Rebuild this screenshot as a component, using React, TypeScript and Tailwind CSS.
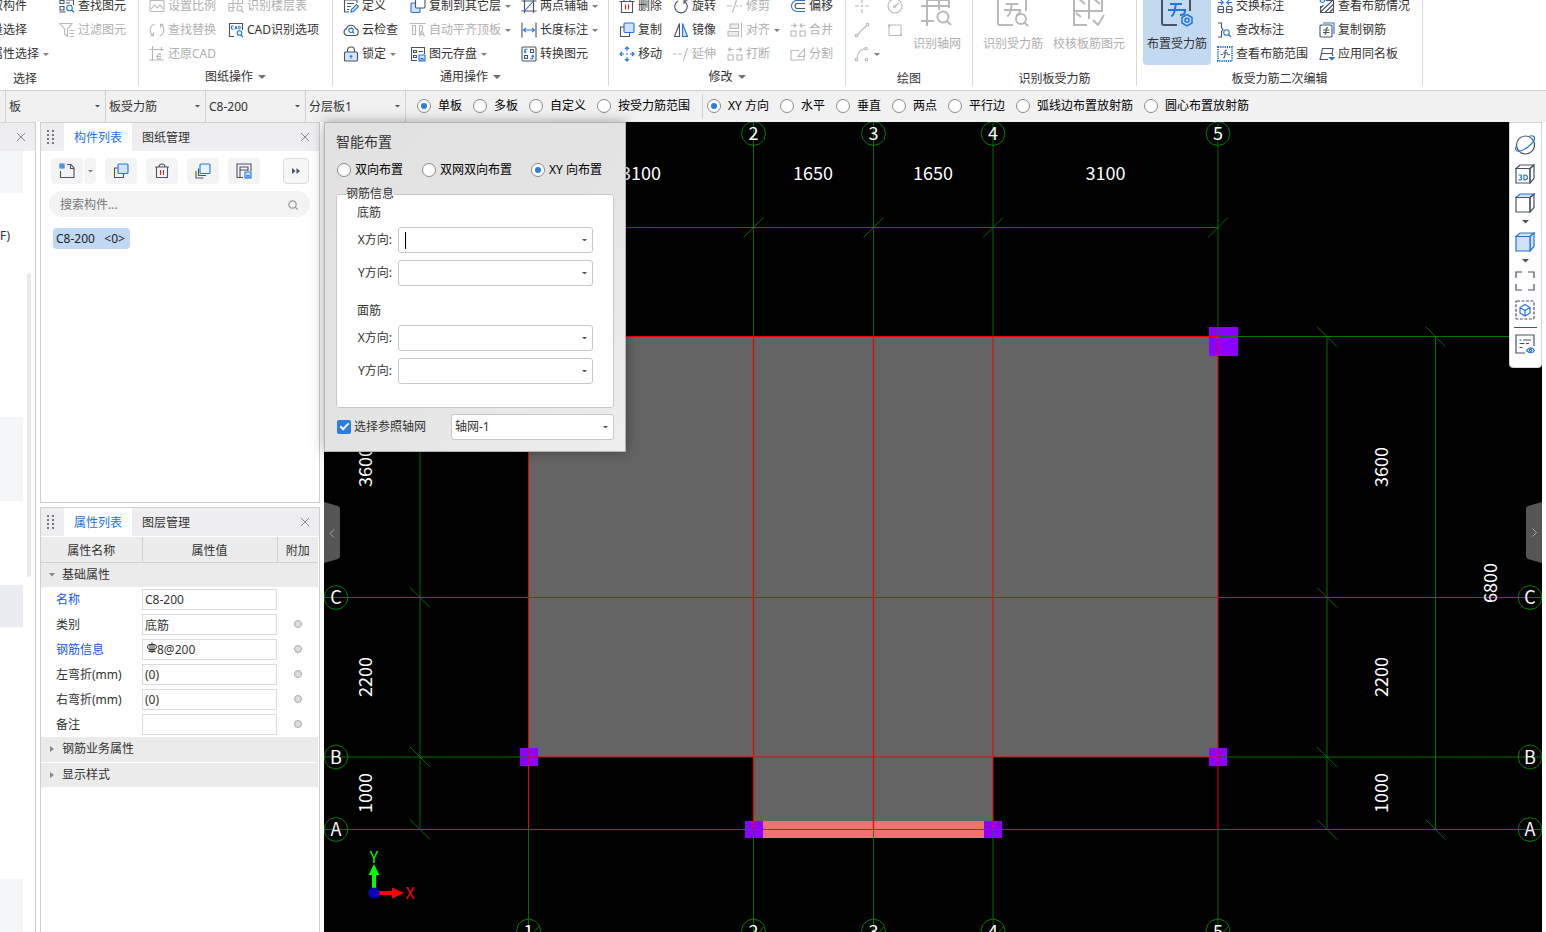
import React from "react";

const DARK = "#4a5266";
const BLUE = "#2374e1";
const GRAY = "#b9b9b9";

type IconProps = { children: React.ReactNode; size?: string; color?: string };

function Icon({ children, size = "size-4", color = DARK }: IconProps) {
  return (
    <svg viewBox="0 0 16 16" className={`${size} shrink-0`} fill="none" stroke={color} strokeWidth="1.1" aria-hidden="true">
      {children}
    </svg>
  );
}

function Caret({ className = "w-[5px] text-[#808080]" }: { className?: string }) {
  return (
    <svg viewBox="0 0 8 4" className={`${className} shrink-0`} fill="currentColor" aria-hidden="true">
      <path d="M0 0H8L4 4Z" />
    </svg>
  );
}

const icons: Record<string, React.ReactNode> = {
  find: (
    <Icon>
      <path d="M1 2.500h4v3H1zM1 8.500h4v3.500H1zM7 2h7.500v5M7 5h4M0.500 14h6" />
      <circle cx="10.500" cy="10" r="2.800" stroke={BLUE} />
      <path d="M12.500 12l2.500 2.500" stroke={BLUE} />
    </Icon>
  ),
  filter: (
    <Icon color={GRAY}>
      <path d="M1 1.500h12L8.500 7v7.500L5.500 12V7zM10.500 8.500H15M10.500 11.500H15M10.500 14.500H15" />
    </Icon>
  ),
  scale: (
    <Icon color={GRAY}>
      <rect x="1" y="2.500" width="14" height="11" rx="1" />
      <path d="M2 11l3.500-4L8 10l3-3 3 4" />
    </Icon>
  ),
  swap: (
    <Icon color={GRAY}>
      <path d="M5.500 2A6.500 6.500 0 0 0 4 13.500M4.500 10.500v3.200H1.500M10.500 14A6.500 6.500 0 0 0 12 2.500M11.500 5.500V2.300h3" />
    </Icon>
  ),
  restore: (
    <Icon color={GRAY}>
      <path d="M3.500 0v15M0.500 3.500H15M0.500 14H15M12.500 1v4M12 8.500a2.500 2.500 0 1 0 0 4M8 10.500h4" />
    </Icon>
  ),
  floors: (
    <Icon color={GRAY}>
      <path d="M5 1v12M10 1v6M0.500 5.500H15M1 9.500h6M5 1h9.500v5M1 5.500V13h5" />
      <circle cx="11.500" cy="10.500" r="2.500" />
      <path d="M13.500 12.500l2 2" />
    </Icon>
  ),
  cad: (
    <Icon>
      <path d="M6 14.500H1.500V1.500h13V8" />
      <path d="M5.600 4H3.500v3h2.100M7 7.300l1-3.300 1 3.300M10.800 4v3c2.600 0 2.600-3 0-3z" stroke={BLUE} strokeWidth="1" />
      <circle cx="11.500" cy="11" r="2.300" stroke={BLUE} />
      <path d="M13 13l2 2" stroke={BLUE} />
    </Icon>
  ),
  define: (
    <Icon>
      <path d="M14 5V2H1.500v12H6M4 5.500h7M4 8.500h4M4 11.500h2" />
      <path d="M8.500 11.500l5-5 2 2-5 5-2.500.5z" stroke={BLUE} fill="#d6e6fb" />
    </Icon>
  ),
  cloud: (
    <Icon>
      <path d="M4 13.500a3.500 3.500 0 0 1-.5-6.800 4.700 4.700 0 0 1 9-.2 3.600 3.600 0 0 1 0 7z" />
      <circle cx="8" cy="8.300" r="2.200" stroke={BLUE} />
      <path d="M9.600 10l1.600 1.600" stroke={BLUE} />
    </Icon>
  ),
  lock: (
    <Icon>
      <rect x="1.500" y="6" width="13" height="9" rx="1" fill="#d6e6fb" />
      <path d="M4.500 6V4.500a3.500 3.500 0 0 1 7 0V6" />
      <path d="M8 9v3.500M6.500 10.200h3" stroke={BLUE} />
    </Icon>
  ),
  copy: (
    <Icon>
      <path d="M5.500 5H1.500v9.500h9V11" />
      <rect x="5" y="1" width="10" height="9.500" rx="1" stroke={BLUE} fill="#d0e2f9" />
    </Icon>
  ),
  layers: (
    <Icon>
      <rect x="1" y="5" width="9" height="9.500" rx="1" stroke={BLUE} fill="#d0e2f9" />
      <rect x="5.500" y="1" width="9.500" height="9" rx="1" fill="#fff" />
    </Icon>
  ),
  alignTop: (
    <Icon color={GRAY}>
      <path d="M0 1.500h16M2.500 3.500h3v9h-3zM12.500 3.500v4M9.500 3.500h3M9.500 3.500v9M9.500 14.500l2.500-6 2.500 6M10.500 12.500h3" />
    </Icon>
  ),
  store: (
    <Icon>
      <path d="M7 14.500H1.500v-13h13V8M3.500 4.500h3v2h-3zM3.500 9.500h3v2h-3zM8.500 5.500h4.500" />
      <path d="M9 9h6v6H9zM11 15v-2.500h2V15" stroke={BLUE} fill="#d0e2f9" />
    </Icon>
  ),
  twoPoint: (
    <Icon>
      <path d="M0.500 3h15M0.500 13h15M3.500 1v14M12.500 1v14" />
      <path d="M3.500 13l9-10" stroke={BLUE} />
    </Icon>
  ),
  length: (
    <Icon>
      <path d="M1 0.500v15M15 0.500v15" />
      <path d="M2.500 8h11M5 5.800L2.500 8 5 10.200M11 5.800L13.500 8 11 10.200" stroke={BLUE} />
    </Icon>
  ),
  convert: (
    <Icon>
      <rect x="1" y="1" width="14" height="14" rx="1" />
      <path d="M9.500 3.500h3v3h-3zM3.500 9.500h3v3h-3z" />
      <path d="M6.500 3.200H4v3.500M2.800 5.500L4 6.800l1.200-1.300M9 12.800h2.800V9.500M10.500 10.700l1.300-1.300 1.200 1.300" stroke={BLUE} />
    </Icon>
  ),
  trash: (
    <Icon>
      <path d="M0.500 3.500h15M2.500 3.500v11h11v-11M5 3.500v-2h6v2" />
      <path d="M6.500 6.500v5M9.500 6.500v5" stroke="#e02020" />
    </Icon>
  ),
  rotate: (
    <Icon>
      <path d="M5 3a6.300 6.300 0 1 0 6 0M11 6V2.800h3.500" />
    </Icon>
  ),
  mirror: (
    <Icon>
      <path d="M6.500 1.500v13H1.500z" />
      <path d="M9.500 1.500v13h5z" stroke={BLUE} fill="#d0e2f9" />
    </Icon>
  ),
  move: (
    <Icon color={BLUE}>
      <path d="M8 1v4M8 11v4M1 8h4M11 8h4M6 3l2-2 2 2M6 13l2 2 2-2M3 6L1 8l2 2M13 6l2 2-2 2M7 8h2" />
    </Icon>
  ),
  trim: (
    <Icon color={GRAY}>
      <path d="M0 8h5M9.500 2L5.500 14.500M9 8h2M12.500 8h2.500" />
    </Icon>
  ),
  extend: (
    <Icon color={GRAY}>
      <path d="M0 8h3.500M5 8h4M14.500 2l-4 12.500" />
    </Icon>
  ),
  align: (
    <Icon color={GRAY}>
      <path d="M3 2h8.500v4.500H3zM1 9.500h10.500V14H1zM14.500 0.500v15" fill="#eee" />
    </Icon>
  ),
  breakUp: (
    <Icon color={GRAY}>
      <path d="M1 9h5v5H1zM10 9h5v5h-5zM6.500 3.500H1.500M3.500 1.500l-2 2 2 2M9.500 3.500h5M12.500 1.500l2 2-2 2" />
    </Icon>
  ),
  merge: (
    <Icon color={GRAY}>
      <path d="M1 9h5v5H1zM10 9h5v5h-5zM1 3.500h5M4 1.500l2 2-2 2M15 3.500h-5M12 1.500l-2 2 2 2" />
    </Icon>
  ),
  split: (
    <Icon color={GRAY}>
      <path d="M9 4.500H1v9.500h13V9M8 10.500l6.500-7.500v7.500z" />
    </Icon>
  ),
  offset: (
    <Icon>
      <path d="M15 2.500H7a5.500 5.500 0 0 0 0 11h8" stroke={BLUE} />
      <path d="M15 5.500H7.500a2.500 2.500 0 0 0 0 5H15" />
    </Icon>
  ),
  point: (
    <Icon color={GRAY}>
      <path d="M8 1v4M8 11v4M1 8h4M11 8h4M7 8h2M8 7v2" />
    </Icon>
  ),
  line: (
    <Icon color={GRAY}>
      <circle cx="2.500" cy="13.500" r="1.300" />
      <circle cx="13.500" cy="2.500" r="1.300" />
      <path d="M3.500 12.500l9-9" />
    </Icon>
  ),
  arc: (
    <Icon color={GRAY}>
      <circle cx="2.500" cy="13.500" r="1.300" />
      <circle cx="12.500" cy="13.500" r="1.300" />
      <circle cx="12" cy="2.500" r="1.300" />
      <path d="M3 12c.5-5 3-8 7.500-9.500" />
    </Icon>
  ),
  circle: (
    <Icon color={GRAY}>
      <circle cx="8" cy="8" r="7" />
      <path d="M8.500 8l3.500-3" />
      <circle cx="7.500" cy="8.500" r="1" />
    </Icon>
  ),
  rect: (
    <Icon color={GRAY}>
      <rect x="2" y="3" width="12" height="10.500" rx="1" />
      <path d="M1 3.500h2.500M13 13h2" strokeWidth="2" />
    </Icon>
  ),
  exchange: (
    <Icon>
      <rect x="1" y="8.500" width="5.500" height="6" rx="1" />
      <rect x="9.500" y="8.500" width="5.500" height="6" rx="1" />
      <path d="M1 11.500h5.500M9.500 11.500H15" />
      <path d="M1 4.500h5M4 2l2.200 2.500L4 6.500M15 4.500h-5M12 2L9.800 4.500 12 6.500" stroke={BLUE} />
    </Icon>
  ),
  inspect: (
    <Icon>
      <path d="M1 1h3.500v4.500L6 7.500 4.500 9.500V15H1" />
      <circle cx="9.500" cy="10.500" r="2.800" stroke={BLUE} />
      <path d="M11.500 12.500L14 15" stroke={BLUE} />
    </Icon>
  ),
  range: (
    <Icon>
      <rect x="1" y="1" width="14" height="14" stroke={BLUE} strokeWidth="1.800" strokeDasharray="1.200 1" />
      <path d="M10 4C7.500 4 8 5.500 8 8s0 4-2 4M6 7h5" />
      <path d="M3.500 8.500H6M10 8.500h3" stroke={BLUE} />
    </Icon>
  ),
  hatch: (
    <Icon>
      <path d="M7 2.500h7.500v12h-13V8M1.500 14L13 3M6 14.500L14.500 6M10.500 14.500l4-4M1.500 10l3-3" />
      <path d="M1 3c1.500-2 3.500-2 5 0-1.500 2-3.500 2-5 0z" stroke={BLUE} />
    </Icon>
  ),
  copyBar: (
    <Icon>
      <rect x="1" y="3" width="12" height="12" rx="1" />
      <path d="M9 5.500C7 5.500 7 7 7 9s0 3.500-1.500 3.500M4 8h6.500M4 10.500h6.500" />
      <path d="M4 1h11v11" stroke={BLUE} />
    </Icon>
  ),
  applyName: (
    <Icon>
      <path d="M3.500 2.500h10.500L13 7.500H2.500zM2.500 7.500L1 13.500h8M13 7.500l1 2.500" />
      <path d="M10.500 11.500h4.500L12.800 14z" stroke={BLUE} fill={BLUE} />
    </Icon>
  ),
};

type ItemDef = { icon?: string; label?: string; off?: boolean; caret?: boolean; name?: string };

function RibbonItem({ icon, label, off, caret, name }: ItemDef) {
  return (
    <button
      type="button"
      disabled={off}
      aria-label={name}
      className="flex h-6 items-center gap-[3px] whitespace-nowrap text-[#333] disabled:text-[#b0b0b0]"
    >
      {icon && icons[icon]}
      {label && <span>{label}</span>}
      {caret && <Caret className="ml-px w-[6px] text-[#808080]" />}
    </button>
  );
}

function Column({ items, className }: { items: ItemDef[]; className: string }) {
  return (
    <div className={`flex shrink-0 flex-col items-start ${className}`}>
      {items.map((it, i) => (
        <RibbonItem key={i} {...it} />
      ))}
    </div>
  );
}

function Group({ title, caret, className, inset = "pl-[10px]", footer = "justify-center", children }: {
  title: string;
  caret?: boolean;
  className: string;
  inset?: string;
  footer?: string;
  children: React.ReactNode;
}) {
  return (
    <section className={`flex shrink-0 flex-col border-r border-[#d9d9d9] ${className}`}>
      <div className={`flex h-[72px] ${inset}`}>{children}</div>
      <div className={`flex h-[20px] items-center gap-[5px] text-[#333] ${caret ? "pt-[2px]" : "pt-[5px]"} ${footer}`}>
        <span>{title}</span>
        {caret && <Caret className="w-2 text-[#707070]" />}
      </div>
    </section>
  );
}

function BigButton({ label, active, className, children }: {
  label: string;
  active?: boolean;
  className: string;
  children: React.ReactNode;
}) {
  return (
    <button
      type="button"
      disabled={!active}
      className={`flex h-[71px] shrink-0 flex-col items-center whitespace-nowrap ${active ? "rounded-b bg-[#c3d9f1] text-[#333]" : "text-[#b0b0b0]"} ${className}`}
    >
      <svg viewBox="0 0 32 32" className="mt-[2px] size-8 shrink-0" fill="none" stroke={active ? DARK : GRAY} strokeWidth="2" aria-hidden="true">
        {children}
      </svg>
      <span className="mt-2">{label}</span>
    </button>
  );
}

function Ribbon() {
  return (
    <header className="flex h-[91px] shrink-0 items-end overflow-hidden border-b border-[#d2d2d2] bg-white pb-1">
      <Group title="选择" className="w-[139px]" inset="pl-0" footer="pl-[13px]">
        <Column className="-ml-[9px] w-[68px]" items={[{ label: "取构件" }, { label: "量选择" }, { label: "属性选择", caret: true }]} />
        <Column className="w-[76px]" items={[{ icon: "find", label: "查找图元" }, { icon: "filter", label: "过滤图元", off: true }]} />
      </Group>
      <Group title="图纸操作" caret className="w-[194px]">
        <Column
          className="w-[79px]"
          items={[
            { icon: "scale", label: "设置比例", off: true },
            { icon: "swap", label: "查找替换", off: true },
            { icon: "restore", label: "还原CAD", off: true },
          ]}
        />
        <Column className="w-[95px]" items={[{ icon: "floors", label: "识别楼层表", off: true }, { icon: "cad", label: "CAD识别选项" }]} />
      </Group>
      <Group title="通用操作" caret className="w-[276px]">
        <Column className="w-[67px]" items={[{ icon: "define", label: "定义" }, { icon: "cloud", label: "云检查" }, { icon: "lock", label: "锁定", caret: true }]} />
        <Column
          className="w-[111px]"
          items={[
            { icon: "layers", label: "复制到其它层", caret: true },
            { icon: "alignTop", label: "自动平齐顶板", off: true, caret: true },
            { icon: "store", label: "图元存盘", caret: true },
          ]}
        />
        <Column
          className="w-[80px]"
          items={[
            { icon: "twoPoint", label: "两点辅轴", caret: true },
            { icon: "length", label: "长度标注", caret: true },
            { icon: "convert", label: "转换图元" },
          ]}
        />
      </Group>
      <Group title="修改" caret className="w-[237px]">
        <Column className="w-[54px]" items={[{ icon: "trash", label: "删除" }, { icon: "copy", label: "复制" }, { icon: "move", label: "移动" }]} />
        <Column className="w-[54px]" items={[{ icon: "rotate", label: "旋转" }, { icon: "mirror", label: "镜像" }, { icon: "extend", label: "延伸", off: true }]} />
        <Column
          className="w-[63px]"
          items={[
            { icon: "trim", label: "修剪", off: true },
            { icon: "align", label: "对齐", off: true, caret: true },
            { icon: "breakUp", label: "打断", off: true },
          ]}
        />
        <Column className="w-[50px]" items={[{ icon: "offset", label: "偏移" }, { icon: "merge", label: "合并", off: true }, { icon: "split", label: "分割", off: true }]} />
      </Group>
      <Group title="绘图" className="w-[127px]" inset="pl-2">
        <Column
          className="w-[33px]"
          items={[
            { icon: "point", off: true, name: "点" },
            { icon: "line", off: true, name: "直线" },
            { icon: "arc", off: true, caret: true, name: "弧线" },
          ]}
        />
        <Column className="w-[26px]" items={[{ icon: "circle", off: true, name: "圆" }, { icon: "rect", off: true, name: "矩形" }]} />
        <BigButton label="识别轴网" className="w-[48px]">
          <path d="M6 0v30M0 10h29M18 0v14M28 0v12M0 25h13M6 4h22" />
          <circle cx="22" cy="21" r="5.500" />
          <path d="M26 25l4 4" />
        </BigButton>
      </Group>
      <Group title="识别板受力筋" className="w-[164px]">
        <BigButton label="识别受力筋" className="w-[60px]">
          <path d="M1 0v27a2 2 0 0 0 2 2h13M29 0v15M9 8h12M7 14h16v-1M16 8c-3 0-1 12-6 12M23 14c0 3-1 5-4 5" />
          <circle cx="24" cy="23" r="5" />
          <path d="M27 26l4 4" />
        </BigButton>
        <BigButton label="校核板筋图元" className="ml-[10px] w-[72px]">
          <path d="M1 0v29h13M1 15h28M16 0v23M29 0v16M5 2l7 6M20 2l7 6M3 17l5 4M20 24l5 5 6-10" />
        </BigButton>
      </Group>
      <Group title="板受力筋二次编辑" className="w-[286px]" inset="pl-[6px]">
        <BigButton label="布置受力筋" active className="w-[68px]">
          <path d="M1 0v27a2 2 0 0 0 2 2h13M29 0v15" />
          <path d="M9 8h12M7 14h17v-1M16 8c-3 0-1 12-6 12M24 14c0 4-1 5-5 5" stroke={BLUE} />
          <path d="M26 18.500l5 3v5.500l-5 3-5-3v-5.500z" stroke={BLUE} strokeWidth="1.500" />
          <circle cx="26" cy="24.300" r="2" stroke={BLUE} strokeWidth="1.500" />
        </BigButton>
        <Column className="ml-[6px] w-[102px]" items={[{ icon: "exchange", label: "交换标注" }, { icon: "inspect", label: "查改标注" }, { icon: "range", label: "查看布筋范围" }]} />
        <Column className="w-[92px]" items={[{ icon: "hatch", label: "查看布筋情况" }, { icon: "copyBar", label: "复制钢筋" }, { icon: "applyName", label: "应用同名板" }]} />
      </Group>
    </header>
  );
}

function Radio({ name, label, checked, gap = "gap-[7px]" }: { name: string; label: string; checked?: boolean; gap?: string }) {
  return (
    <label className={`flex items-center whitespace-nowrap text-black ${gap}`}>
      <input
        type="radio"
        name={name}
        defaultChecked={checked}
        className="grid size-3.5 shrink-0 appearance-none place-content-center rounded-full border border-[#8a8a8a] bg-white before:size-1.5 before:rounded-full checked:before:bg-[#2a7de1]"
      />
      <span>{label}</span>
    </label>
  );
}

function BarSelect({ label, value }: { label: string; value: string }) {
  return (
    <div className="flex w-[100px] shrink-0 items-center border-l border-[#d2d2d2] pr-[5px]">
      <select aria-label={label} className="h-full min-w-0 flex-1 appearance-none bg-transparent pl-[3px] text-[#333] outline-none">
        <option>{value}</option>
      </select>
      <Caret className="w-[5px] text-[#4a5266]" />
    </div>
  );
}

function OptionsBar() {
  return (
    <div className="flex h-[31px] shrink-0 overflow-hidden bg-[#f1f1f1] pl-[5px]">
      <BarSelect label="构件大类" value="板" />
      <BarSelect label="构件类型" value="板受力筋" />
      <BarSelect label="构件" value="C8-200" />
      <BarSelect label="分层" value="分层板1" />
      <div className="flex shrink-0 items-center gap-[11px] border-l border-[#d2d2d2] pb-[2px] pl-[11px] pr-3">
        <Radio name="area" label="单板" checked />
        <Radio name="area" label="多板" />
        <Radio name="area" label="自定义" />
        <Radio name="area" label="按受力筋范围" />
      </div>
      <div className="my-[3px] flex shrink-0 items-center gap-[11px] border-l border-[#d2d2d2] pb-[2px] pl-1">
        <Radio name="direction" label="XY 方向" checked />
        <Radio name="direction" label="水平" />
        <Radio name="direction" label="垂直" />
        <Radio name="direction" label="两点" />
        <Radio name="direction" label="平行边" />
        <Radio name="direction" label="弧线边布置放射筋" />
        <Radio name="direction" label="圆心布置放射筋" />
      </div>
    </div>
  );
}

function CloseButton() {
  return (
    <button type="button" aria-label="关闭" className="flex size-4 items-center justify-center">
      <svg viewBox="0 0 8 8" className="size-2" stroke="#8a8a8a" strokeWidth="1" aria-hidden="true">
        <path d="M0 0l8 8M8 0L0 8" />
      </svg>
    </button>
  );
}

function NavigationDock() {
  return (
    <aside className="flex w-9 shrink-0 flex-col border-r border-[#cfcfcf] bg-white">
      <div className="flex h-[29px] shrink-0 items-center justify-end border-t border-[#d9d9d9] bg-[#eeeef0] pr-[6px]">
        <CloseButton />
      </div>
      <div className="flex min-h-0 flex-1 gap-1">
        <div className="flex w-[23px] flex-col overflow-hidden">
          <div className="h-[42px] shrink-0 bg-[#f5f6f8]" />
          <div className="flex h-[224px] shrink-0 items-start pt-[35px]">F)</div>
          <div className="h-[84px] shrink-0 bg-[#f5f6f8]" />
          <div className="mt-[84px] h-[42px] shrink-0 bg-[#eaecf1]" />
          <div className="mt-[252px] flex-1 bg-[#f5f6f8]" />
        </div>
        <div className="mt-[122px] h-[304px] w-1 rounded-full bg-[#e9e9ea]" />
      </div>
    </aside>
  );
}

function PanelHeader({ tabs }: { tabs: [string, string] }) {
  return (
    <div className="flex h-7 shrink-0 items-stretch bg-[#eeeef0]">
      <svg viewBox="0 0 7 14" className="ml-[6px] mr-[10px] w-[7px]" fill="#777" aria-hidden="true">
        {[0, 4, 8, 12].map((y) => (
          <path key={y} d={`M0 ${y}h2v2H0zM5 ${y}h2v2H5z`} />
        ))}
      </svg>
      <button type="button" className="w-[68px] bg-white pt-[2px] text-[#1a73e8]">{tabs[0]}</button>
      <button type="button" className="w-[68px] pt-[2px] text-[#333]">{tabs[1]}</button>
      <div className="ml-auto flex items-center pr-[6px]">
        <CloseButton />
      </div>
    </div>
  );
}

function ToolButton({ label, children, className = "w-8 bg-[#f4f4f4]" }: { label: string; children: React.ReactNode; className?: string }) {
  return (
    <button type="button" aria-label={label} className={`flex h-[26px] items-center justify-center rounded-sm ${className}`}>
      {children}
    </button>
  );
}

function ComponentPanel() {
  return (
    <section className="flex h-[381px] shrink-0 flex-col border border-[#cfcfcf] bg-white">
      <PanelHeader tabs={["构件列表", "图纸管理"]} />
      <div className="mt-[7px] flex gap-[9px] pl-[10px] pr-[10px]">
        <div className="flex">
          <ToolButton label="新建">
            <Icon>
              <path d="M8 1.500h4L15 5v9.500H1.500V8M11.500 1.500v4H15" />
              <path d="M1 1h4v4H1zM1 3h4M3 1v4" stroke={BLUE} />
            </Icon>
          </ToolButton>
          <ToolButton label="新建选项" className="w-[13px] border-l border-white bg-[#f4f4f4]">
            <Caret />
          </ToolButton>
        </div>
        <ToolButton label="复制">{icons.copy}</ToolButton>
        <ToolButton label="删除">
          <Icon>
            <path d="M1 4h14M2.500 4v10.500h11V4M5 4c0-4 6-4 6 0" />
            <path d="M6.500 7v5M9.500 7v5" stroke="#e02020" />
          </Icon>
        </ToolButton>
        <ToolButton label="层间复制">
          <Icon>
            <path d="M3.500 5.500v7h7.500M1 8v7h7.500" />
            <rect x="5" y="1" width="10" height="9.500" rx="1" stroke={BLUE} fill="#eaf3ff" />
          </Icon>
        </ToolButton>
        <ToolButton label="存档">
          <Icon>
            <path d="M7 14.500H1V1h14v7M4 15V4h8v4M4 7h8" />
            <path d="M9 9h6v6H9zM11 15v-2.500h2V15" stroke={BLUE} fill="#d0e2f9" />
          </Icon>
        </ToolButton>
        <ToolButton label="更多" className="ml-auto w-[26px] border border-[#dcdcdc] bg-[#f7f7f7]">
          <svg viewBox="0 0 8 6" className="w-2" fill={DARK} aria-hidden="true">
            <path d="M0 0l3.500 3L0 6zM4.500 0L8 3 4.500 6z" />
          </svg>
        </ToolButton>
      </div>
      <div className="ml-2 mr-[9px] mt-[7px] flex h-[26px] items-center rounded-full bg-[#f3f3f3] pl-[11px] pr-3 pt-px">
        <input aria-label="搜索构件" placeholder="搜索构件..." className="min-w-0 flex-1 bg-transparent outline-none placeholder:text-[#777]" />
        <svg viewBox="0 0 10 10" className="size-[10px]" fill="none" stroke="#999" strokeWidth="1.200" aria-hidden="true">
          <circle cx="4.500" cy="4.500" r="3.700" />
          <path d="M7.200 7.200L9.500 9.500" />
        </svg>
      </div>
      <button type="button" className="ml-3 mt-[11px] flex h-[21px] items-center self-start whitespace-pre rounded-sm bg-[#c1d8f2] pl-[3px] pr-[5px] text-[#222]">
        {"C8-200   <0>"}
      </button>
    </section>
  );
}

const properties = [
  { id: "name", label: "名称", value: "C8-200", blue: true, dot: false, bar: false },
  { id: "kind", label: "类别", value: "底筋", blue: false, dot: true, bar: false },
  { id: "rebar", label: "钢筋信息", value: "8@200", blue: true, dot: true, bar: true },
  { id: "left", label: "左弯折(mm)", value: "(0)", blue: false, dot: true, bar: false },
  { id: "right", label: "右弯折(mm)", value: "(0)", blue: false, dot: true, bar: false },
  { id: "note", label: "备注", value: "", blue: false, dot: true, bar: false },
];

function SectionRow({ title, open }: { title: string; open?: boolean }) {
  return (
    <tr className="h-[25px] border-b border-white bg-[#ebebeb]">
      <td colSpan={3}>
        <button type="button" className="flex items-center pl-2">
          <svg viewBox="0 0 6 6" className="mr-[7px] size-[6px]" fill="#888" aria-hidden="true">
            <path d={open ? "M0 1h6L3 4.500z" : "M1 0l4 3-4 3z"} />
          </svg>
          {title}
        </button>
      </td>
    </tr>
  );
}

function PropertyPanel() {
  return (
    <section className="flex min-h-0 flex-1 flex-col border border-b-0 border-[#cfcfcf] bg-white pr-px">
      <div className="-mr-px">
        <PanelHeader tabs={["属性列表", "图层管理"]} />
      </div>
      <table className="mt-px w-full table-fixed border-collapse text-[#333]">
        <colgroup>
          <col className="w-[101px]" />
          <col />
          <col className="w-[41px]" />
        </colgroup>
        <thead>
          <tr className="h-[25px] border-b border-[#d2d2d2] bg-[#ececec]">
            <th className="border-r border-[#d2d2d2] pt-[3px] font-normal">属性名称</th>
            <th className="border-r border-[#d2d2d2] pt-[3px] font-normal">属性值</th>
            <th className="pt-[3px] font-normal">附加</th>
          </tr>
        </thead>
        <tbody>
          <SectionRow title="基础属性" open />
          {properties.map((p) => (
            <tr key={p.id} className="h-[25px]">
              <td className={p.blue ? "pl-[15px] text-[#1557f0]" : "pl-[15px]"}>
                <label htmlFor={p.id}>{p.label}</label>
              </td>
              <td>
                <div className="flex h-[21px] items-center border border-[#dcdcdc] pl-[2px]">
                  {p.bar && (
                    <svg viewBox="0 0 10 12" className="mb-1 ml-[2px] h-3 w-[10px]" fill="none" stroke="#222" strokeWidth="0.9" aria-hidden="true">
                      <rect x="0.500" y="2.500" width="9" height="5" rx="2.500" />
                      <path d="M5 0.500v10.500M3 2.500v7M7 2.500v7M1.500 9.500h7" />
                    </svg>
                  )}
                  <input id={p.id} defaultValue={p.value} className="h-full min-w-0 flex-1 bg-transparent outline-none" />
                </div>
              </td>
              <td>
                {p.dot && <button type="button" aria-label={`附加 ${p.label}`} className="mx-auto mb-px block size-2 rounded-full border border-[#ababab] bg-[#dcdde0]" />}
              </td>
            </tr>
          ))}
          <SectionRow title="钢筋业务属性" />
          <SectionRow title="显示样式" />
        </tbody>
      </table>
    </section>
  );
}

const GREEN = "#008000";
const RED = "#f00000";
const axisX = [528.5, 753.5, 873.5, 993, 1218];
const axisY = [
  { y: 597.5, name: "C" },
  { y: 757, name: "B" },
  { y: 829.5, name: "A" },
];

function Bubble({ x, y, text }: { x: number; y: number; text: string }) {
  const points = Array.from({ length: 12 }, (_, i) => {
    const a = (i * Math.PI) / 6;
    return `${(x + 12 * Math.cos(a)).toFixed(1)},${(y + 12 * Math.sin(a)).toFixed(1)}`;
  }).join(" ");
  return (
    <g>
      <polygon points={points} fill="none" stroke={GREEN} />
      <text x={x} y={y + 6.5} fill="#fff" textAnchor="middle">{text}</text>
    </g>
  );
}

function Upright({ x, y, text }: { x: number; y: number; text: string }) {
  return (
    <text transform={`translate(${x + 6} ${y}) rotate(-90)`} fill="#fff" textAnchor="middle">{text}</text>
  );
}

function Drawing() {
  return (
    <svg
      viewBox="324 122 1218 810"
      preserveAspectRatio="xMidYMid slice"
      className="block h-full w-full font-['Noto_Sans_CJK_SC',sans-serif] text-lg"
      fill="currentColor"
      role="img"
      aria-label="板平面图"
    >
      <rect x="324" y="122" width="1218" height="810" fill="#000" />
      <path d="M528.500 336.500H1218V757H993V829.500H753.500V757H528.500Z" fill="#646464" />
      <rect x="762" y="821" width="222" height="17" fill="#ea7474" />
      <g fill="#8b00ff">
        <rect x="1209" y="327" width="29" height="29" />
        <rect x="520" y="748" width="18" height="18" />
        <rect x="1209" y="748" width="18" height="18" />
        <rect x="745" y="821" width="18" height="17" />
        <rect x="984" y="821" width="18" height="17" />
      </g>
      <g stroke={GREEN} strokeWidth="1" fill="none">
        {axisX.map((x) => (
          <path key={x} opacity="0.85" d={`M${x} 122V336M${x} 830V932M${x - 10} 237.500l20 -20`} />
        ))}
        {axisY.map(({ y }) => (
          <path key={y} opacity="0.9" d={`M324 ${y}H528.500M1218 ${y}H1542`} />
        ))}
        <path d="M528.500 227.500H1218M1218 336.500H1542M420 336V829.500M1327 336V829.500M1435.500 336V829.500" opacity="0.9" />
        <path d="M1317 326.500l20 20M1425.500 326.500l20 20M1425.500 819.500l20 20" opacity="0.85" />
        {axisY.map(({ y }) => (
          <path key={y} opacity="0.85" d={`M410 ${y - 10}l20 20M1317 ${y - 10}l20 20`} />
        ))}
      </g>
      <g stroke={RED} strokeWidth="1" fill="none">
        <path d="M528.500 829.500V336.500H1218V829.500" />
        <path d="M528.500 757H1218" opacity="0.9" />
        <path d="M528.500 829.500H1218" />
        <path d="M753.500 336.500V829.500M873.500 336.500V829.500" strokeWidth="1.400" opacity="0.9" />
        <path d="M993 336.500V829.500" />
        <path d="M528.500 597.500H1218" stroke="#b01818" />
      </g>
      {axisX.map((x, i) => (
        <g key={x}>
          {i > 0 && <Bubble x={x} y={133.5} text={String(i + 1)} />}
          <Bubble x={x} y={931} text={String(i + 1)} />
          <path d={`M${x + 5} 933l5 -6`} stroke={GREEN} />
        </g>
      ))}
      {axisY.map(({ y, name }) => (
        <g key={name}>
          <Bubble x={336} y={y} text={name} />
          <Bubble x={1530} y={y} text={name} />
        </g>
      ))}
      <g fill="#fff" textAnchor="middle">
        <text x="641" y="179.500">3100</text>
        <text x="813" y="179.500">1650</text>
        <text x="933" y="179.500">1650</text>
        <text x="1105.500" y="179.500">3100</text>
      </g>
      {[366, 1381.5].map((x) => (
        <g key={x}>
          <Upright x={x} y={467} text="3600" />
          <Upright x={x} y={677} text="2200" />
          <Upright x={x} y={793} text="1000" />
        </g>
      ))}
      <Upright x={1490.5} y={583} text="6800" />
      <g>
        <path d="M372 889V875h-3.500L374 864l5.500 11H376V889z" fill="#0f0" />
        <path d="M378 891h14v-3.500l12 5.500-12 5.500V895H378z" fill="#f00" />
        <circle cx="374" cy="893" r="5.500" fill="#0000c0" />
        <text x="374" y="862.500" fill="#0f0" textAnchor="middle" className="text-base">Y</text>
        <text x="410" y="899" fill="#f00" textAnchor="middle" className="text-base">X</text>
      </g>
    </svg>
  );
}

function ComboField({ id, label, active }: { id: string; label: string; active?: boolean }) {
  return (
    <div className="flex h-[26px] items-center gap-[6px] px-5">
      <label htmlFor={id} className="w-[35px] shrink-0 whitespace-nowrap pb-px text-right">{label}</label>
      <div className="flex h-full min-w-0 flex-1 items-center rounded-[3px] border border-[#c8c8c8] bg-white pl-[6px] pr-[5px]">
        {active && <span className="h-[17px] w-px bg-black" />}
        <input id={id} className="h-full min-w-0 flex-1 bg-transparent outline-none" />
        <Caret className="w-[5px] text-[#4a5266]" />
      </div>
    </div>
  );
}

function LayoutDialog() {
  return (
    <form
      aria-label="智能布置"
      className="absolute left-0 top-0 w-[302px] border border-[#b4b4b4] bg-linear-to-br from-[#e2e2e2] via-[#e3e3e3] to-[#eeeeee] px-[11px] pb-[11px] pt-[11px] text-[#333] shadow-[0_0_12px_rgba(0,0,0,0.35)]"
    >
      <h2 className="text-sm leading-4">智能布置</h2>
      <div className="mt-3 flex h-4 items-center gap-[19px] pl-px">
        <Radio name="layout" label="双向布置" gap="gap-1" />
        <Radio name="layout" label="双网双向布置" gap="gap-1" />
        <Radio name="layout" label="XY 向布置" checked gap="gap-1" />
      </div>
      <fieldset className="mt-2 rounded-[3px] border border-[#c8c8c8] bg-white pb-[23px]">
        <legend className="ml-[9px]">钢筋信息</legend>
        <h3 className="mt-[3px] pl-5">底筋</h3>
        <div className="flex flex-col gap-[7px] pt-[6px]">
          <ComboField id="bottom-x" label="X方向:" active />
          <ComboField id="bottom-y" label="Y方向:" />
        </div>
        <h3 className="mt-[17px] pl-5">面筋</h3>
        <div className="flex flex-col gap-[7px] pt-[6px]">
          <ComboField id="top-x" label="X方向:" />
          <ComboField id="top-y" label="Y方向:" />
        </div>
      </fieldset>
      <div className="mt-[6px] flex h-[26px] items-center justify-between">
        <label className="flex items-center gap-[3px] pb-px pl-px">
          <input
            type="checkbox"
            defaultChecked
            className="grid size-3.5 appearance-none place-content-center rounded-xs bg-[#2a7de1] before:mb-[2px] before:h-[5px] before:w-[9px] before:-rotate-45 before:border-b-2 before:border-l-2 before:border-white"
          />
          选择参照轴网
        </label>
        <div className="flex h-full w-[163px] items-center rounded-[3px] border border-[#c8c8c8] bg-white pr-[5px]">
          <select aria-label="参照轴网" className="h-full min-w-0 flex-1 appearance-none bg-transparent pl-[3px] outline-none">
            <option>轴网-1</option>
          </select>
          <Caret className="w-[5px] text-[#4a5266]" />
        </div>
      </div>
    </form>
  );
}

function Cube({ stroke, top, face }: { stroke: string; top?: string; face?: string }) {
  return (
    <>
      <path d="M1 4.500L5 1h14l-4 3.500z" fill={top} stroke={top ? BLUE : stroke} />
      <path d="M15 4.500L19 1v13.500L15 19z" fill={face} stroke={stroke} />
      <path d="M1 4.500h14V19H1z" fill={face} stroke={stroke} />
    </>
  );
}

function ViewButton({ label, children }: { label: string; children: React.ReactNode }) {
  return (
    <button type="button" aria-label={label} className="flex h-[29px] items-center justify-center">
      <svg viewBox="0 0 20 20" className="size-5" fill="none" stroke={DARK} strokeWidth="1.200" aria-hidden="true">
        {children}
      </svg>
    </button>
  );
}

function ViewToolbar() {
  return (
    <nav aria-label="视图" className="absolute right-0 top-0 flex w-[33px] flex-col items-center rounded-b-sm border border-[#d6d6d6] bg-white pb-[9px] pr-px pt-[7px]">
      <ViewButton label="动态观察">
        <circle cx="10.500" cy="10" r="9" />
        <path d="M14 1.300c4.500-1.500 6.500.5 5 4C17 10 9 15.500 4 16.200c-3.500.4-4-2.200-2.500-5.200" stroke={BLUE} />
      </ViewButton>
      <ViewButton label="三维">
        <Cube stroke={DARK} />
        <path d="M3.500 11h2.500q1.200 1.300-.3 2.200 1.800 1 .3 2.600H3.500M9 11v5h1q2.500-.5 2.500-2.500T10 11z" stroke={BLUE} />
      </ViewButton>
      <ViewButton label="俯视">
        <Cube stroke={DARK} top="#d0e2f9" />
      </ViewButton>
      <button type="button" aria-label="视角选项" className="flex h-[10px] w-4 items-center justify-center">
        <Caret className="w-[7px] text-[#4a5266]" />
      </button>
      <ViewButton label="实体">
        <Cube stroke={BLUE} top="#d0e2f9" face="#d0e2f9" />
      </ViewButton>
      <button type="button" aria-label="显示选项" className="flex h-[10px] w-4 items-center justify-center">
        <Caret className="w-[7px] text-[#4a5266]" />
      </button>
      <ViewButton label="全屏">
        <path d="M1 7V1h6M13 1h6v6M19 13v6h-6M7 19H1v-6" />
      </ViewButton>
      <ViewButton label="选中范围">
        <rect x="1" y="1" width="18" height="18" rx="1" strokeDasharray="3 1.500" />
        <path d="M10 4.500l5 3v5.500l-5 3-5-3V7.500zM5 7.500l5 3 5-3M10 10.500V16" stroke={BLUE} />
      </ViewButton>
      <span className="mb-px mt-[3px] h-px w-[23px] bg-[#4a5266]" />
      <ViewButton label="显示设置">
        <path d="M10 19H1V1h18v11M4.500 6h2M8 6h8M4.500 9.500h5M11 9.500h3M4.500 13.500h3" />
        <path d="M11.500 16.500c2.500-3.500 6-3.500 8 0-2 3-5.500 3-8 0z" stroke={BLUE} />
        <circle cx="15.500" cy="16.300" r="1.200" stroke={BLUE} />
      </ViewButton>
    </nav>
  );
}

function SideHandle({ right }: { right?: boolean }) {
  return (
    <button
      type="button"
      aria-label={right ? "展开右侧" : "收起左侧"}
      className={`absolute top-[380px] h-[61px] w-4 ${right ? "right-0" : "left-0"}`}
    >
      <svg viewBox="0 0 16 61" className="size-full" fill="none" aria-hidden="true">
        <path d={right ? "M16 0L2 4Q0 5 0 7v47q0 2 2 3l14 4z" : "M0 0l14 4q2 1 2 3v47q0 2-2 3L0 61z"} fill="#555" />
        <path d={right ? "M6.500 26.500l4 4-4 4" : "M10 27.500l-4 4 4 4"} stroke="#aaa" />
      </svg>
    </button>
  );
}

export default function App() {
  return (
    <div className="flex h-screen flex-col overflow-hidden bg-white font-['Noto_Sans','Noto_Sans_CJK_SC',sans-serif] text-xs leading-4 text-[#333]">
      <Ribbon />
      <OptionsBar />
      <div className="flex min-h-0 flex-1">
        <NavigationDock />
        <div className="ml-1 mr-1 flex w-[280px] shrink-0 flex-col gap-1">
          <ComponentPanel />
          <PropertyPanel />
        </div>
        <main className="relative mr-1 min-w-0 flex-1 bg-black">
          <Drawing />
          <SideHandle />
          <SideHandle right />
          <ViewToolbar />
          <LayoutDialog />
        </main>
      </div>
    </div>
  );
}
